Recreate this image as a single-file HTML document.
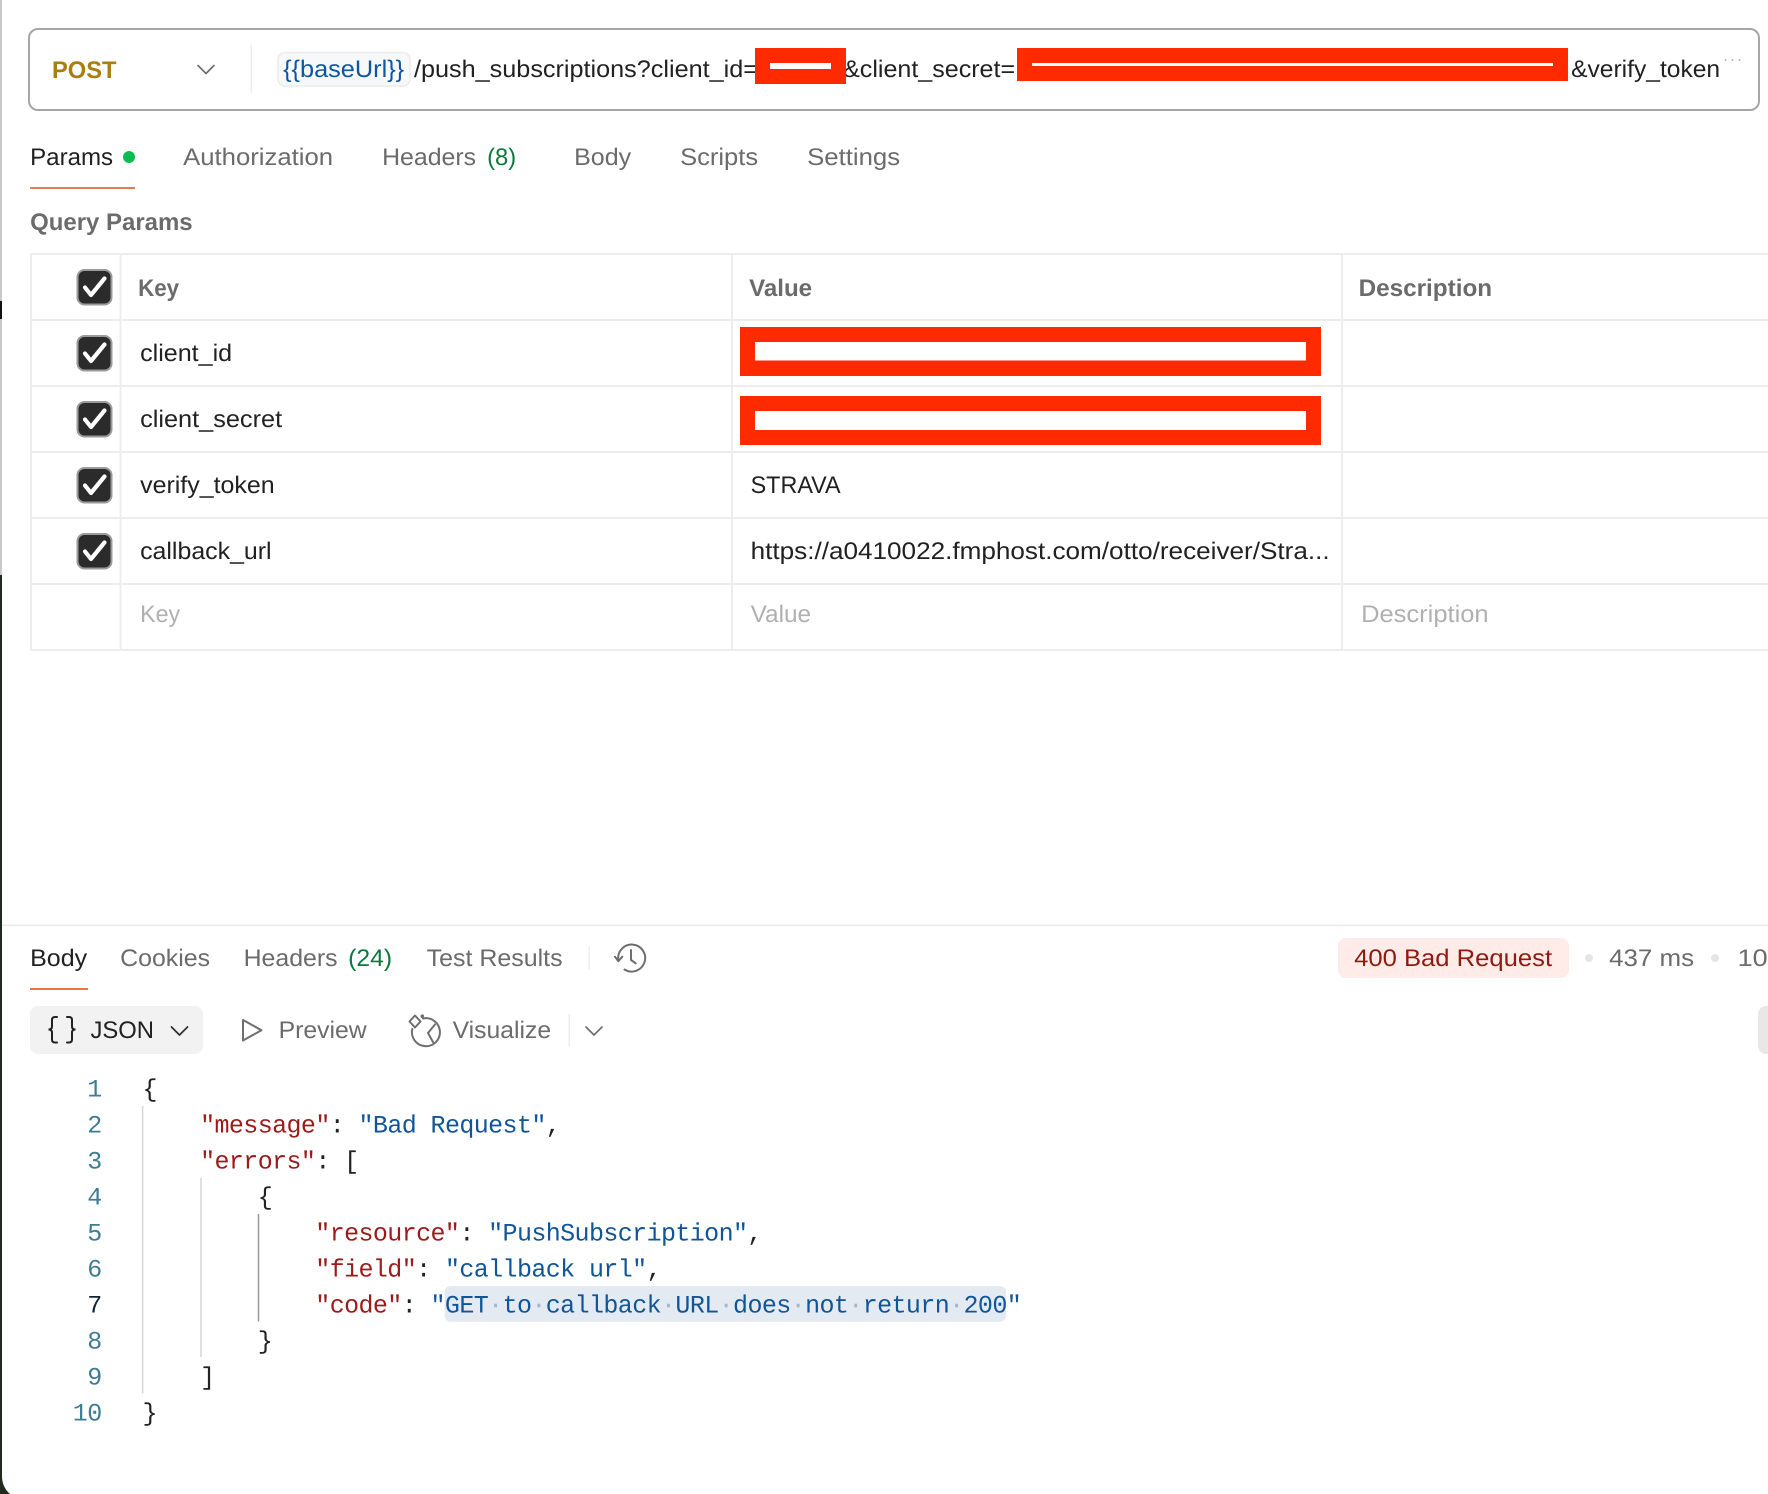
<!DOCTYPE html>
<html lang="en">
<head>
<meta charset="utf-8">
<title>Postman request</title>
<style>
html,body{margin:0;padding:0;width:1768px;height:1494px;overflow:hidden;background:#fff}
svg{display:block}
text{font-family:"Liberation Sans",sans-serif;font-size:24px;fill:#212121;text-rendering:geometricPrecision;transform:translate(-0.9px,0)}
.g{fill:#6b6b6b}
.b{font-weight:700;fill:#6b6b6b}
.p{fill:#b0b0b0}
.gr{fill:#0a7a3c}
.m{font-family:"Liberation Mono",monospace;font-size:25px;letter-spacing:-0.6px;fill:#212121;transform:translate(-0.5px,0)}
.k{fill:#9c1a1a}
.v{fill:#0f5598}
.d{fill:#a4b8cc}
.n{font-family:"Liberation Mono",monospace;font-size:25px;letter-spacing:-0.6px;fill:#3d7d94;text-anchor:end}
.ln{stroke:#ededed;stroke-width:2;fill:none}
.ic{stroke:#6e6e6e;stroke-width:2;fill:none;stroke-linecap:round;stroke-linejoin:round}
.cb{fill:#2b2b2b;stroke:#9b9b9b;stroke-width:2}
.ck{fill:none;stroke:#fff;stroke-width:4.2;stroke-linecap:round;stroke-linejoin:round}
.nx{transform:none}
</style>
</head>
<body>
<svg xmlns="http://www.w3.org/2000/svg" width="1768" height="1494" viewBox="0 0 1768 1494">
  <!-- window edge -->
  <rect x="0" y="0" width="1768" height="1494" fill="#fff"/>
  <rect x="0" y="0" width="2" height="575" fill="#c8c8c8"/>
  <rect x="0" y="301" width="2" height="18" fill="#111"/>
  <path d="M0 575H2V1478Q3 1488 10 1494H0Z" fill="#1f2b1e"/>

  <!-- URL bar -->
  <rect x="29" y="29" width="1730" height="81" rx="9" fill="#fff" stroke="#a6a6a6" stroke-width="2"/>
  <text x="52" y="78" class="b nx" style="fill:#ab7d0f" textLength="64.5" lengthAdjust="spacingAndGlyphs">POST</text>
  <path d="M198 65.5L206 73.5L214 65.5" class="ic" style="stroke-width:1.7"/>
  <rect x="250.5" y="45" width="1.5" height="48" fill="#ededed"/>
  <rect x="278" y="52.5" width="132" height="33.5" rx="7" fill="#f7f8fa" stroke="#ececec" stroke-width="1.5"/>
  <text x="284" y="77" style="fill:#0b57a4" textLength="121" lengthAdjust="spacingAndGlyphs">{{baseUrl}}</text>
  <text x="414" y="77" class="nx" textLength="344" lengthAdjust="spacingAndGlyphs">/push_subscriptions?client_id=</text>
  <text x="844" y="77" textLength="172" lengthAdjust="spacingAndGlyphs">&amp;client_secret=</text>
  <text x="1572" y="77" textLength="149" lengthAdjust="spacingAndGlyphs">&amp;verify_token</text>
  <rect x="1719" y="50" width="3" height="34" fill="#fff"/>
  <rect x="755" y="48" width="91" height="36" fill="#ff2a00"/>
  <rect x="770" y="63" width="61" height="6" fill="#fff"/>
  <rect x="1017" y="48" width="551" height="33" fill="#ff2a00"/>
  <rect x="1032" y="63" width="521" height="3" fill="#fff"/>
  <circle cx="1725.5" cy="60" r="1" fill="#b5b5b5"/><circle cx="1732.5" cy="60" r="1" fill="#b5b5b5"/><circle cx="1739.5" cy="60" r="1" fill="#b5b5b5"/>

  <!-- request tabs -->
  <text x="31" y="165" textLength="83" lengthAdjust="spacingAndGlyphs">Params</text>
  <circle cx="129" cy="157" r="6" fill="#0cbb52"/>
  <rect x="30" y="187" width="105" height="2" fill="#df7f58"/>
  <text x="184" y="165" class="g" textLength="150" lengthAdjust="spacingAndGlyphs">Authorization</text>
  <text x="383" y="165" class="g" textLength="94" lengthAdjust="spacingAndGlyphs">Headers</text>
  <text x="488" y="165" class="gr" textLength="29" lengthAdjust="spacingAndGlyphs">(8)</text>
  <text x="575" y="165" class="g" textLength="57" lengthAdjust="spacingAndGlyphs">Body</text>
  <text x="681" y="165" class="g" textLength="78" lengthAdjust="spacingAndGlyphs">Scripts</text>
  <text x="808" y="165" class="g" textLength="93" lengthAdjust="spacingAndGlyphs">Settings</text>

  <text x="31" y="230" class="b" textLength="162.5" lengthAdjust="spacingAndGlyphs">Query Params</text>

  <!-- table -->
  <path class="ln" d="M30 254H1768M30 320H1768M30 386H1768M30 452H1768M30 518H1768M30 584H1768M30 650H1768M31 253V651M120.5 253V651M732 253V651M1342 253V651"/>

  <g>
    <rect class="cb" x="77.5" y="270" width="34" height="34.5" rx="7"/>
    <path class="ck" d="M85 287.5L91 295L104.5 278.5"/>
    <rect class="cb" x="77.5" y="336" width="34" height="34.5" rx="7"/>
    <path class="ck" d="M85 353.5L91 361L104.5 344.5"/>
    <rect class="cb" x="77.5" y="402" width="34" height="34.5" rx="7"/>
    <path class="ck" d="M85 419.5L91 427L104.5 410.5"/>
    <rect class="cb" x="77.5" y="468" width="34" height="34.5" rx="7"/>
    <path class="ck" d="M85 485.5L91 493L104.5 476.5"/>
    <rect class="cb" x="77.5" y="534" width="34" height="34.5" rx="7"/>
    <path class="ck" d="M85 551.5L91 559L104.5 542.5"/>
  </g>

  <text x="139" y="296" class="b" textLength="41" lengthAdjust="spacingAndGlyphs">Key</text>
  <text x="750" y="296" class="b" textLength="63" lengthAdjust="spacingAndGlyphs">Value</text>
  <text x="1359.5" y="296" class="b" textLength="133.5" lengthAdjust="spacingAndGlyphs">Description</text>

  <text x="141" y="361" textLength="92" lengthAdjust="spacingAndGlyphs">client_id</text>
  <text x="141" y="427" textLength="142" lengthAdjust="spacingAndGlyphs">client_secret</text>
  <text x="141" y="493" textLength="134.5" lengthAdjust="spacingAndGlyphs">verify_token</text>
  <text x="141" y="559" textLength="131.5" lengthAdjust="spacingAndGlyphs">callback_url</text>

  <rect x="740" y="327" width="581" height="49" fill="#ff2a00"/>
  <rect x="755" y="342" width="551" height="18.5" fill="#fff"/>
  <rect x="740" y="396" width="581" height="49" fill="#ff2a00"/>
  <rect x="755" y="411" width="551" height="19" fill="#fff"/>

  <text x="751.5" y="493" textLength="90" lengthAdjust="spacingAndGlyphs">STRAVA</text>
  <text x="751.5" y="559" textLength="579" lengthAdjust="spacingAndGlyphs">https://a0410022.fmphost.com/otto/receiver/Stra...</text>

  <text x="141" y="622" class="p" textLength="40" lengthAdjust="spacingAndGlyphs">Key</text>
  <text x="751.5" y="622" class="p" textLength="60.5" lengthAdjust="spacingAndGlyphs">Value</text>
  <text x="1362" y="622" class="p" textLength="127.5" lengthAdjust="spacingAndGlyphs">Description</text>

  <!-- response header -->
  <rect x="2" y="924.5" width="1766" height="1.7" fill="#ededed"/>
  <text x="31" y="966" textLength="57" lengthAdjust="spacingAndGlyphs">Body</text>
  <rect x="30" y="988" width="58" height="2" fill="#ee7246"/>
  <text x="121" y="966" class="g" textLength="90" lengthAdjust="spacingAndGlyphs">Cookies</text>
  <text x="244.5" y="966" class="g" textLength="94" lengthAdjust="spacingAndGlyphs">Headers</text>
  <text x="349" y="966" class="gr" textLength="44" lengthAdjust="spacingAndGlyphs">(24)</text>
  <text x="427.5" y="966" class="g" textLength="136" lengthAdjust="spacingAndGlyphs">Test Results</text>
  <rect x="588.5" y="947" width="1.5" height="23" fill="#ededed"/>
  <path class="ic" d="M618.3 960A13.5 13.5 0 1 1 624.5 969.5"/>
  <path class="ic" d="M615 956.7L618.3 961.2L622.3 956.7"/>
  <path class="ic" d="M631 950V960L635.7 963.3"/>

  <rect x="1338" y="938" width="231" height="40" rx="8" fill="#ffebe7"/>
  <text x="1355" y="966" style="fill:#8e1a10" textLength="198" lengthAdjust="spacingAndGlyphs">400 Bad Request</text>
  <circle cx="1589" cy="958" r="4" fill="#e6e6e6"/>
  <text x="1610" y="966" class="g" textLength="85" lengthAdjust="spacingAndGlyphs">437 ms</text>
  <circle cx="1715" cy="958" r="4" fill="#e6e6e6"/>
  <text x="1738.5" y="966" class="g" textLength="30" lengthAdjust="spacingAndGlyphs">10</text>

  <!-- response toolbar -->
  <rect x="30" y="1006" width="173" height="48" rx="8" fill="#f2f2f2"/>
  <path d="M57 1017H55Q52 1017 52 1020V1026.5Q52 1029.5 48.5 1029.5Q52 1029.5 52 1032.5V1039.5Q52 1042.5 55 1042.5H57" fill="none" stroke="#212121" stroke-width="2" stroke-linecap="round"/>
  <path d="M67 1017H69Q72 1017 72 1020V1026.5Q72 1029.5 75.5 1029.5Q72 1029.5 72 1032.5V1039.5Q72 1042.5 69 1042.5H67" fill="none" stroke="#212121" stroke-width="2" stroke-linecap="round"/>
  <text x="90.5" y="1038" class="nx" textLength="63.5" lengthAdjust="spacingAndGlyphs">JSON</text>
  <path d="M171.5 1027L179.5 1035L187.5 1027" fill="none" stroke="#333" stroke-width="1.8" stroke-linecap="round" stroke-linejoin="round"/>
  <path class="ic" d="M243 1020V1040.5L261.5 1030.2Z"/>
  <text x="279.5" y="1038" class="g" textLength="88" lengthAdjust="spacingAndGlyphs">Preview</text>
  <path class="ic" d="M423 1018.5A14 14 0 1 1 412.3 1029"/>
  <path class="ic" d="M435 1024.5L428 1033L433 1042"/>
  <path class="ic" d="M415 1015.5L420.5 1021.5L415 1027.5L409.5 1021.5Z"/>
  <circle cx="422.3" cy="1016.2" r="1.8" fill="#6e6e6e"/>
  <text x="453.5" y="1038" class="g" textLength="98.5" lengthAdjust="spacingAndGlyphs">Visualize</text>
  <rect x="568.5" y="1014" width="1.5" height="32" fill="#ededed"/>
  <path class="ic" d="M586 1027L594 1035L602 1027" style="stroke-width:1.7"/>
  <rect x="1758" y="1006" width="30" height="48" rx="8" fill="#e8e8e8"/>

  <!-- code -->
  <path d="M142.6 1106V1393.5M201 1178V1357" stroke="#d6d6d6" stroke-width="1.5" fill="none"/>
  <path d="M258.5 1214V1321.5" stroke="#999" stroke-width="1.5" fill="none"/>
  <rect x="444.6" y="1286" width="561.4" height="35.7" rx="6" fill="#e4eaf2"/>

  <text class="n" x="102.5" y="1096.7">1</text>
  <text class="n" x="102.5" y="1132.7">2</text>
  <text class="n" x="102.5" y="1168.7">3</text>
  <text class="n" x="102.5" y="1204.7">4</text>
  <text class="n" x="102.5" y="1240.7">5</text>
  <text class="n" x="102.5" y="1276.7">6</text>
  <text class="n" x="102.5" y="1312.7" style="fill:#10263a">7</text>
  <text class="n" x="102.5" y="1348.7">8</text>
  <text class="n" x="102.5" y="1384.7">9</text>
  <text class="n" x="102.5" y="1420.7">10</text>

  <text class="m" x="143" y="1096.7">{</text>
  <text class="m" x="200.6" y="1132.7"><tspan class="k">"message"</tspan>: <tspan class="v">"Bad Request"</tspan>,</text>
  <text class="m" x="200.6" y="1168.7"><tspan class="k">"errors"</tspan>: [</text>
  <text class="m" x="258.2" y="1204.7">{</text>
  <text class="m" x="315.8" y="1240.7"><tspan class="k">"resource"</tspan>: <tspan class="v">"PushSubscription"</tspan>,</text>
  <text class="m" x="315.8" y="1276.7"><tspan class="k">"field"</tspan>: <tspan class="v">"callback url"</tspan>,</text>
  <text class="m" x="315.8" y="1312.7"><tspan class="k">"code"</tspan>: <tspan class="v">"GET</tspan><tspan class="d">·</tspan><tspan class="v">to</tspan><tspan class="d">·</tspan><tspan class="v">callback</tspan><tspan class="d">·</tspan><tspan class="v">URL</tspan><tspan class="d">·</tspan><tspan class="v">does</tspan><tspan class="d">·</tspan><tspan class="v">not</tspan><tspan class="d">·</tspan><tspan class="v">return</tspan><tspan class="d">·</tspan><tspan class="v">200"</tspan></text>
  <text class="m" x="258.2" y="1348.7">}</text>
  <text class="m" x="200.6" y="1384.7">]</text>
  <text class="m" x="143" y="1420.7">}</text>
</svg>
</body>
</html>
